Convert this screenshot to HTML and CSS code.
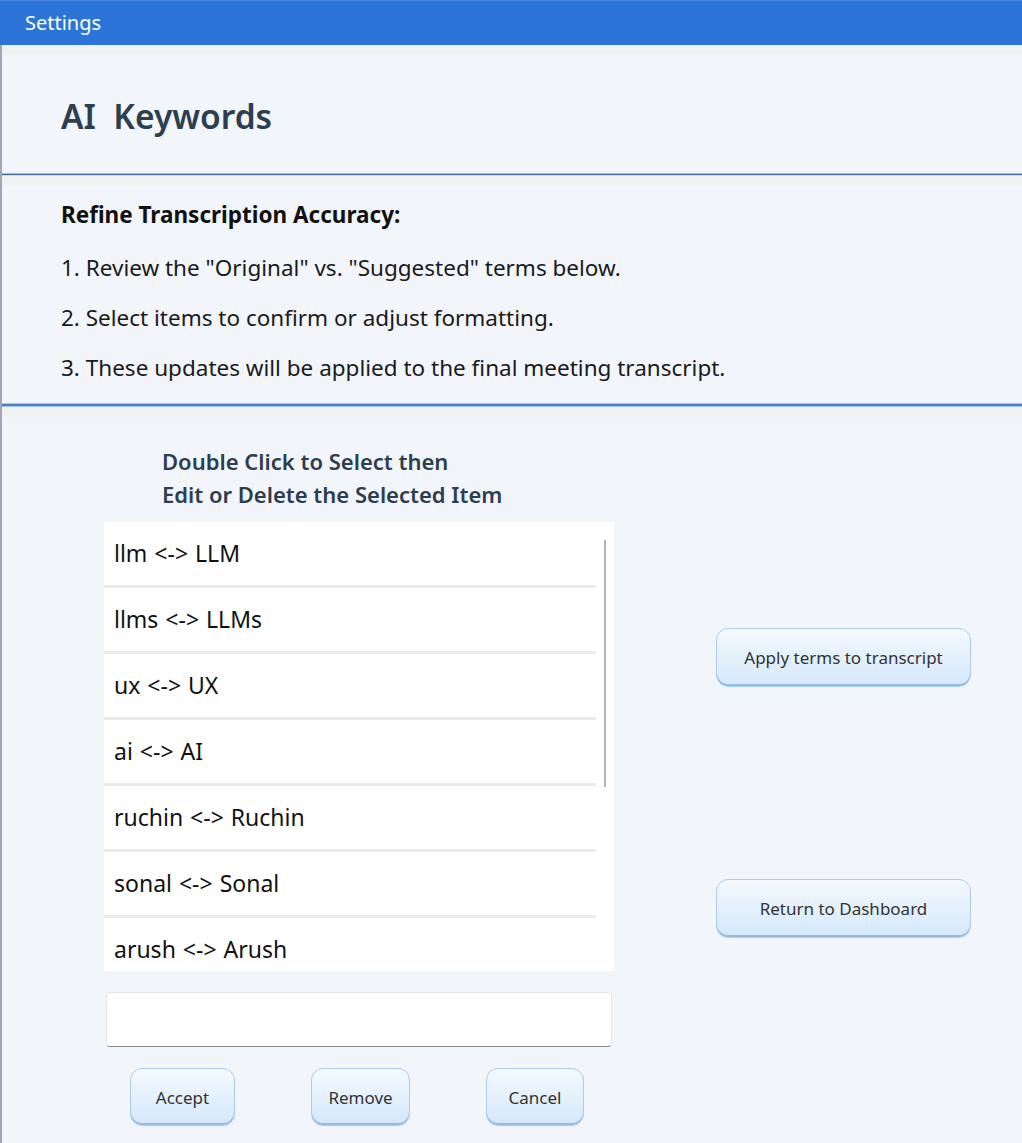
FILE: index.html
```html
<!DOCTYPE html>
<html lang="en">
<head>
<meta charset="utf-8">
<title>Settings</title>
<link rel="stylesheet" href="styles.css">
</head>
<body>
<div class="titlebar">Settings</div>
<div class="window">
  <div class="band band-top"></div>
  <header class="panel header">
    <h1 class="heading">AI&nbsp; Keywords</h1>
  </header>
  <div class="rule rule-dark"></div>
  <div class="band band-mid"></div>
  <section class="panel instructions">
    <p class="lead">Refine Transcription Accuracy:</p>
    <p class="step">1. Review the "Original" vs. "Suggested" terms below.</p>
    <p class="step">2. Select items to confirm or adjust formatting.</p>
    <p class="step">3. These updates will be applied to the final meeting transcript.</p>
  </section>
  <div class="rule rule-blue"></div>
  <div class="band band-low"></div>
  <main class="panel main">
    <div class="left">
      <p class="caption">Double Click to Select then<br>Edit or Delete the Selected Item</p>
      <div class="listbox">
        <ul class="items">
          <li class="item">llm &lt;-&gt; LLM</li>
          <li class="item">llms &lt;-&gt; LLMs</li>
          <li class="item">ux &lt;-&gt; UX</li>
          <li class="item">ai &lt;-&gt; AI</li>
          <li class="item">ruchin &lt;-&gt; Ruchin</li>
          <li class="item">sonal &lt;-&gt; Sonal</li>
          <li class="item">arush &lt;-&gt; Arush</li>
        </ul>
        <div class="scroll"><div class="thumb"></div></div>
      </div>
      <div class="editor"></div>
      <div class="actions">
        <button class="btn btn-accept">Accept</button>
        <button class="btn btn-remove">Remove</button>
        <button class="btn btn-cancel">Cancel</button>
      </div>
    </div>
    <div class="right">
      <button class="btn btn-wide">Apply terms to transcript</button>
      <button class="btn btn-wide">Return to Dashboard</button>
    </div>
  </main>
</div>
</body>
</html>
```

FILE: styles.css
```css
* { box-sizing: border-box; }
html, body {
  margin: 0;
  padding: 0;
  height: 100%;
}
body {
  font-family: "Noto Sans", "Open Sans", sans-serif;
  background: #f2f5fa;
  overflow: hidden;
}
.titlebar {
  height: 45px;
  background: #2d74d9;
  border-top: 1px solid #4a86dd;
  color: #ffffff;
  font-size: 20px;
  line-height: 44px;
  padding-left: 25px;
}
.window {
  border-left: 2px solid #a3a4b8;
  height: 1098px;
  display: flex;
  flex-direction: column;
}
.band { background: #f0f1f3; }
.band-top { height: 10px; }
.band-mid { height: 9px; }
.band-low { height: 11px; }
.panel { background: #f2f6fb; }
.header {
  height: 118px;
  padding-left: 59px;
  padding-top: 4px;
  display: flex;
  align-items: center;
}
.heading {
  margin: 0;
  font-size: 33.5px;
  font-weight: 600;
  color: #2c3e50;
}
.rule-dark {
  height: 3px;
  border-top: 1px solid #9fbbdb;
  background: #45709f;
  border-bottom: 1px solid #c8d9ec;
}
.rule-blue {
  height: 4px;
  border-top: 1px solid #a6c6ef;
  background: #4a7fcf;
  border-bottom: 1px solid #a6c6ef;
}
.instructions {
  height: 218px;
  padding: 15px 0 0 59px;
}
.lead {
  margin: 0 0 23px;
  font-size: 22.5px;
  font-weight: 700;
  color: #111111;
  line-height: 30px;
}
.step {
  margin: 0 0 20px;
  font-size: 22.5px;
  color: #1a1a1a;
  line-height: 30px;
}
.main {
  flex: 1;
  display: flex;
  padding-left: 102px;
}
.left {
  width: 510px;
  display: flex;
  flex-direction: column;
}
.caption {
  margin: 27px 0 11px 58px;
  font-size: 22px;
  font-weight: 600;
  color: #2c3e50;
  line-height: 33px;
}
.listbox {
  height: 449px;
  background: #ffffff;
  display: flex;
  overflow: hidden;
}
.items {
  list-style: none;
  margin: 0;
  padding: 0;
  width: 492px;
}
.item {
  height: 66px;
  border-bottom: 3px solid #ebebeb;
  padding-left: 10px;
  font-size: 23px;
  color: #111111;
  line-height: 63px;
  word-spacing: 1px;
}
.scroll {
  flex: 1;
  padding: 18px 0 0 8px;
}
.thumb {
  width: 2px;
  height: 247px;
  background: #b3b3b3;
}
.editor {
  margin: 21px 2px 0;
  height: 55px;
  background: #ffffff;
  border: 1px solid #e4e4e4;
  border-bottom: 1px solid #8a8a8a;
  border-radius: 4px;
}
.actions {
  display: flex;
  justify-content: space-between;
  padding: 0 30px 0 26px;
  margin-top: 21px;
}
.btn {
  font-family: "Noto Sans", "Open Sans", sans-serif;
  font-size: 17px;
  color: #333333;
  height: 58px;
  border: 1px solid #a9cdf0;
  border-radius: 12px;
  background: linear-gradient(#f4f9ff, #d4e8fa);
  box-shadow: inset 0 -2px 0 #97bbe2;
  padding: 0;
  cursor: pointer;
}
.btn-accept { width: 105px; }
.btn-remove { width: 99px; }
.btn-cancel { width: 98px; }
.right {
  margin-left: 102px;
  padding-top: 210px;
  display: flex;
  flex-direction: column;
  gap: 192px;
}
.btn-wide {
  width: 255px;
  height: 59px;
}
```
